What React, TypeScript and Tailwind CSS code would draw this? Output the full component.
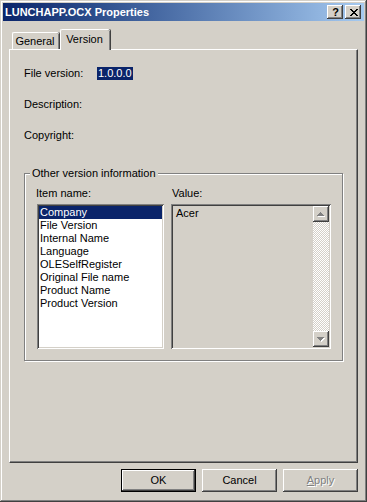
import React from "react";

const raised =
  "shadow-[inset_-1px_-1px_0_#404040,inset_1px_1px_0_#ffffff,inset_-2px_-2px_0_#808080,inset_2px_2px_0_#d4d0c8]";
const sunken =
  "shadow-[inset_1px_1px_0_#808080,inset_-1px_-1px_0_#ffffff,inset_2px_2px_0_#404040,inset_-2px_-2px_0_#d4d0c8]";

function Pixels({ rows, color, w, h }: { rows: string[]; color: string; w: number; h: number }) {
  return (
    <svg width={w} height={h} viewBox={`0 0 ${w} ${h}`} shapeRendering="crispEdges">
      {rows.map((r, y) =>
        r.split("").map((c, x) =>
          c === "X" ? <rect key={`${x}-${y}`} x={x} y={y} width={1} height={1} fill={color} /> : null
        )
      )}
    </svg>
  );
}

const closeRows = ["XX....XX", ".XX..XX.", "..XXXX..", "...XX...", "..XXXX..", ".XX..XX.", "XX....XX"];
const upRows = ["...X....", "..XXX...", ".XXXXX..", "XXXXXXX.", "........"];
const upShadow = ["........", "....X...", "...XXX..", "..XXXXX.", ".XXXXXXX"];
const downRows = ["XXXXXXX.", ".XXXXX..", "..XXX...", "...X....", "........"];
const downShadow = ["........", ".XXXXXXX", "..XXXXX.", "...XXX..", "....X..."];

function Arrow({ up }: { up: boolean }) {
  return (
    <div className={`w-[16px] h-[16px] bg-[#d4d0c8] ${raised} flex items-center justify-center`}>
      <div className="relative w-[8px] h-[5px]">
        <div className="absolute left-0 top-0">
          <Pixels rows={up ? upShadow : downShadow} color="#ffffff" w={8} h={5} />
        </div>
        <div className="absolute left-0 top-0">
          <Pixels rows={up ? upRows : downRows} color="#808080" w={8} h={5} />
        </div>
      </div>
    </div>
  );
}

const items = [
  "Company",
  "File Version",
  "Internal Name",
  "Language",
  "OLESelfRegister",
  "Original File name",
  "Product Name",
  "Product Version",
];

export default function App() {
  return (
    <div
      className={`w-[367px] h-[502px] bg-[#d4d0c8] p-[3px] flex flex-col font-['Liberation_Sans',Arial,sans-serif] text-[11px] leading-[13px] text-black shadow-[inset_-1px_-1px_0_#404040,inset_1px_1px_0_#d4d0c8,inset_-2px_-2px_0_#808080,inset_2px_2px_0_#ffffff]`}
    >
      {/* Title bar */}
      <div className="h-[18px] flex items-center pl-[2px] pr-[3px] bg-gradient-to-r from-[#0a246a] to-[#a6caf0]">
        <div className="flex-1 text-white font-bold text-[11px] leading-[13px]">LUNCHAPP.OCX Properties</div>
        <div className="flex gap-[2px]">
          <div className={`w-[16px] h-[14px] bg-[#d4d0c8] ${raised} flex items-center justify-center font-bold text-[11px] leading-[11px] pl-[1px]`}>
            ?
          </div>
          <div className={`w-[16px] h-[14px] bg-[#d4d0c8] ${raised} flex items-center justify-center pl-[1px]`}>
            <Pixels rows={closeRows} color="#000000" w={8} h={7} />
          </div>
        </div>
      </div>

      {/* Tabs */}
      <div className="mt-[8px] mx-[6px] h-[20px] flex items-end pl-[3px]">
        <div className="w-[47px] h-[17px] border-l border-t border-white rounded-tl-[2px] rounded-tr-[2px] shadow-[inset_-1px_0_0_#808080,1px_0_0_#404040] flex items-start justify-center pt-[2px] pr-[2px]">
          General
        </div>
        <div className="relative z-10 ml-[1px] w-[50px] h-[21px] -mb-[1px] bg-[#d4d0c8] border-l border-t border-white rounded-tl-[2px] rounded-tr-[2px] shadow-[inset_-1px_0_0_#808080,1px_0_0_#404040] flex items-start justify-center pt-[3px] pr-[2px]">
          Version
        </div>
      </div>

      {/* Panel */}
      <div className="mx-[6px] h-[414px] border-l border-t border-white border-r border-r-[#404040] border-b border-b-[#404040] shadow-[inset_-1px_-1px_0_#808080] pl-[14px] pt-[17px] flex flex-col">
        <div className="flex flex-col gap-[18px]">
          <div className="h-[13px] flex">
            <div className="w-[73px]">File version:</div>
            <div className="bg-[#0a246a] text-white px-[1px]">1.0.0.0</div>
          </div>
          <div className="h-[13px]">Description:</div>
          <div className="h-[13px]">Copyright:</div>
        </div>

        {/* Group box */}
        <div className="relative mt-[31px] w-[319px] h-[188px] border border-[#808080] shadow-[1px_1px_0_#ffffff,inset_1px_1px_0_#ffffff] pl-[11px] pt-[13px]">
          <div className="absolute left-[5px] -top-[7px] px-[2px] bg-[#d4d0c8]">Other version information</div>
          <div className="flex gap-[7px]">
            <div className="flex flex-col">
              <div className="h-[13px]">Item name:</div>
              <div className={`mt-[4px] ml-[1px] w-[127px] h-[145px] bg-white ${sunken} p-[2px]`}>
                {items.map((it, i) => (
                  <div
                    key={it}
                    className={`h-[13px] pl-[1px] ${i === 0 ? "bg-[#0a246a] text-white" : ""}`}
                  >
                    {it}
                  </div>
                ))}
              </div>
            </div>
            <div className="flex flex-col">
              <div className="h-[13px] ml-[1px]">Value:</div>
              <div className={`mt-[4px] w-[160px] h-[145px] bg-[#d4d0c8] ${sunken} p-[2px] flex`}>
                <div className="flex-1 pl-[3px] pt-[1px]">Acer</div>
                <div className="w-[16px] flex flex-col">
                  <Arrow up />
                  <div className="flex-1 bg-[repeating-conic-gradient(#ffffff_0_25%,#d4d0c8_0_50%)] bg-size-[2px_2px]" />
                  <Arrow up={false} />
                </div>
              </div>
            </div>
          </div>
        </div>
      </div>

      {/* Buttons */}
      <div className="mt-[6px] mx-[6px] flex justify-end gap-[6px]">
        <div className="w-[75px] h-[23px] border border-black">
          <div className={`w-full h-full bg-[#d4d0c8] ${raised} flex items-center justify-center`}>OK</div>
        </div>
        <div className={`w-[75px] h-[23px] bg-[#d4d0c8] ${raised} flex items-center justify-center`}>Cancel</div>
        <div className={`w-[75px] h-[23px] bg-[#d4d0c8] ${raised} flex items-center justify-center text-[#808080] [text-shadow:1px_1px_0_#ffffff]`}>
          <span>
            <span className="underline">A</span>pply
          </span>
        </div>
      </div>
    </div>
  );
}
